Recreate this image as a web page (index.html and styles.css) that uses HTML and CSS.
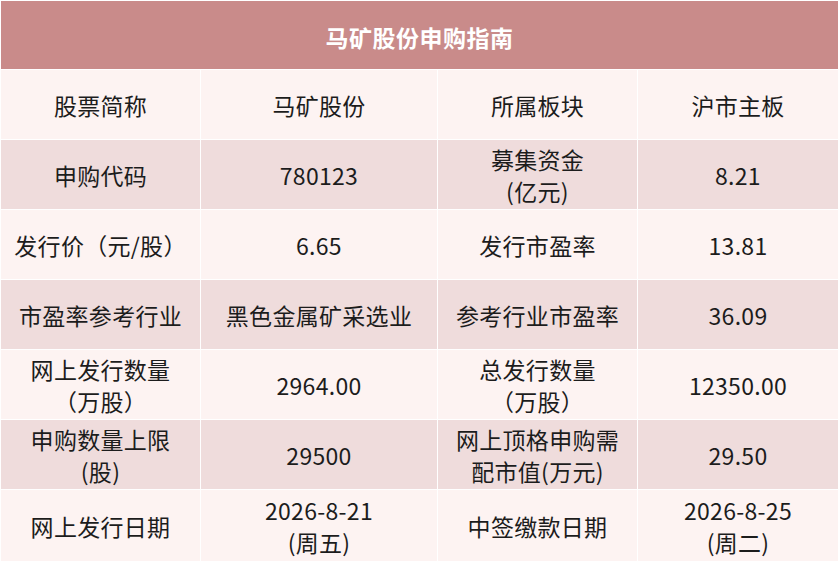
FILE: index.html
```html
<!DOCTYPE html>
<html lang="zh-CN">
<head>
<meta charset="utf-8">
<link rel="stylesheet" href="styles.css">
</head>
<body>
<div class="table">
  <div class="title">马矿股份申购指南</div>
  <div class="row light">
    <div class="cell">股票简称</div>
    <div class="cell">马矿股份</div>
    <div class="cell">所属板块</div>
    <div class="cell">沪市主板</div>
  </div>
  <div class="row dark">
    <div class="cell">申购代码</div>
    <div class="cell">780123</div>
    <div class="cell">募集资金<br>(亿元)</div>
    <div class="cell">8.21</div>
  </div>
  <div class="row light">
    <div class="cell">发行价（元/股）</div>
    <div class="cell">6.65</div>
    <div class="cell">发行市盈率</div>
    <div class="cell">13.81</div>
  </div>
  <div class="row dark">
    <div class="cell">市盈率参考行业</div>
    <div class="cell">黑色金属矿采选业</div>
    <div class="cell">参考行业市盈率</div>
    <div class="cell">36.09</div>
  </div>
  <div class="row light">
    <div class="cell">网上发行数量<br>（万股）</div>
    <div class="cell">2964.00</div>
    <div class="cell">总发行数量<br>（万股）</div>
    <div class="cell">12350.00</div>
  </div>
  <div class="row dark">
    <div class="cell">申购数量上限<br>(股)</div>
    <div class="cell">29500</div>
    <div class="cell">网上顶格申购需<br>配市值(万元)</div>
    <div class="cell">29.50</div>
  </div>
  <div class="row light">
    <div class="cell">网上发行日期</div>
    <div class="cell">2026-8-21<br>(周五)</div>
    <div class="cell">中签缴款日期</div>
    <div class="cell">2026-8-25<br>(周二)</div>
  </div>
</div>
</body>
</html>
```

FILE: styles.css
```css
html, body {
  margin: 0;
  padding: 0;
  background: #ffffff;
}
.table {
  width: 838px;
  height: 561px;
  box-sizing: border-box;
  padding: 1px 0 0 1px;
  display: flex;
  flex-direction: column;
  gap: 1px;
  background: #ffffff;
  font-family: "Noto Sans CJK SC", "Microsoft YaHei", sans-serif;
  color: #1c1c1c;
  overflow: hidden;
}
.title {
  height: 68px;
  flex: none;
  background: #c98b8a;
  color: #ffffff;
  font-weight: bold;
  font-size: 23px;
  letter-spacing: 0.5px;
  display: flex;
  align-items: center;
  justify-content: center;
  padding-top: 3px;
  box-sizing: border-box;
}
.row {
  height: 69px;
  flex: none;
  display: grid;
  grid-template-columns: 199px 236px 199px 1fr;
  gap: 1px;
}
.row:last-child {
  height: 72px;
}
.cell {
  display: flex;
  align-items: center;
  justify-content: center;
  text-align: center;
  font-size: 23px;
  line-height: 32px;
  letter-spacing: 0.3px;
}
.light .cell {
  background: #fdf3f2;
}
.dark .cell {
  background: #efdcdc;
}
```
